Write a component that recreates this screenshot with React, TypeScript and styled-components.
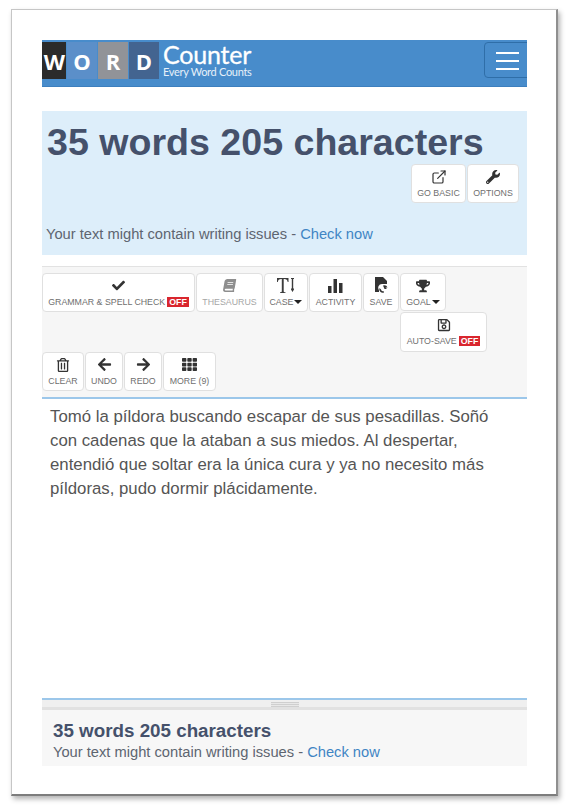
import React from "react";
import styled, { createGlobalStyle } from "styled-components";
import {
  FaArrowLeft,
  FaArrowRight,
  FaBook,
  FaCheck,
  FaRegSave,
  FaRegTrashAlt,
  FaTh,
  FaTrophy,
  FaWrench,
} from "react-icons/fa";
import { ExternalLink } from "lucide-react";

const GlobalStyle = createGlobalStyle`
  html, body {
    margin: 0;
    padding: 0;
    background: #fff;
    font-family: "Liberation Sans", Arial, sans-serif;
  }
  * { box-sizing: border-box; }
`;

const Stage = styled.div`
  width: 569px;
  height: 811px;
  padding: 9px 11px 15px 11px;
  overflow: hidden;
`;

const Sheet = styled.div`
  height: 787px;
  padding: 30px 29px 0 30px;
  background: #fff;
  border: 1px solid #c6c6c6;
  border-right: 2px solid #8f8f8f;
  border-bottom: 2px solid #7d7d7d;
  box-shadow: 2px 3px 5px rgba(0, 0, 0, 0.3);
`;

const Nav = styled.div`
  height: 47px;
  display: flex;
  align-items: flex-start;
  padding-top: 2px;
  background: #488ccb;
  border-bottom: 1px solid #3d7fbe;
  overflow: hidden;
`;

const Tile = styled.div<{ $bg: string; $w: number; $clip?: boolean }>`
  width: ${(p) => p.$w}px;
  height: 37px;
  margin-right: 1px;
  flex: none;
  display: flex;
  align-items: center;
  justify-content: ${(p) => (p.$clip ? "flex-end" : "center")};
  padding-right: ${(p) => (p.$clip ? "1px" : "0")};
  background: ${(p) => p.$bg};
  color: #fff;
  font-family: "Open Sans", sans-serif;
  font-weight: 700;
  font-size: 22px;
  overflow: hidden;
`;

const Brand = styled.div`
  margin-left: 3px;
  flex: none;
  color: #fff;
  font-family: "Lato", sans-serif;
  display: flex;
  flex-direction: column;
`;

const BrandName = styled.div`
  font-size: 25px;
  line-height: 25px;
  letter-spacing: -0.2px;
  -webkit-text-stroke: 0.3px #fff;
`;

const BrandTag = styled.div`
  font-size: 11px;
  line-height: 10px;
  letter-spacing: -0.3px;
  color: #e6f0f9;
`;

const Burger = styled.div`
  width: 55px;
  height: 36px;
  margin-left: auto;
  margin-right: -12px;
  flex: none;
  border: 1px solid #2f6ea8;
  border-radius: 4px;
  padding: 9px 0 0 11px;
  display: flex;
  flex-direction: column;
  gap: 6px;
`;

const BurgerBar = styled.span`
  display: block;
  width: 23px;
  height: 2px;
  background: #fff;
`;

const WordsPanel = styled.div`
  height: 144px;
  margin-top: 24px;
  padding: 9px 8px 0 5px;
  background: #ddeefa;
  display: flex;
  flex-direction: column;
`;

const WordsTitle = styled.h1`
  margin: 0;
  font-size: 37.6px;
  line-height: 44px;
  font-weight: 700;
  color: #45516b;
  white-space: nowrap;
`;

const PanelActions = styled.div`
  display: flex;
  justify-content: flex-end;
`;

const Issues = styled.div`
  font-size: 14.7px;
  line-height: 19px;
  color: #5d6570;
`;

const PanelIssues = styled(Issues)`
  margin-top: 22px;
  margin-left: -1px;
`;

const FooterIssues = styled(Issues)`
  margin-top: 1px;
`;

const CheckLink = styled.a`
  color: #3f85c4;
`;

const Toolbar = styled.div`
  height: 133px;
  margin-top: 11px;
  padding-top: 6px;
  background: #f6f6f6;
  border-top: 1px solid #e2e2e2;
  border-bottom: 2px solid #9cc7ea;
  display: flex;
  flex-direction: column;
`;

const ToolRow = styled.div<{ $indent?: number }>`
  display: flex;
  margin-left: ${(p) => p.$indent ?? 0}px;
`;

const ToolButton = styled.div<{ $w: number; $h?: number; $gap?: number; $muted?: boolean }>`
  width: ${(p) => p.$w}px;
  height: ${(p) => p.$h ?? 39}px;
  margin-right: ${(p) => p.$gap ?? 1}px;
  flex: none;
  background: #fff;
  border: 1px solid #e0e0e0;
  border-radius: 4px;
  display: flex;
  flex-direction: column;
  align-items: center;
  padding-top: 3px;
  color: ${(p) => (p.$muted ? "#8e8e8e" : "#333")};
  svg { display: block; }
`;

const IconSlot = styled.div`
  height: 17px;
  display: flex;
  align-items: center;
  justify-content: center;
`;

const SlantedBook = styled(FaBook)`
  transform: skewX(-10deg);
`;

const ToolLabel = styled.div<{ $muted?: boolean }>`
  margin-top: 3px;
  display: flex;
  align-items: center;
  font-size: 8.8px;
  line-height: 10px;
  white-space: nowrap;
  color: ${(p) => (p.$muted ? "#a6a6a6" : "#6f6f6f")};
`;

const OffBadge = styled.span`
  margin-left: 2px;
  padding: 0 2px;
  background: #d9262e;
  color: #fff;
  font-weight: 700;
  font-size: 8.8px;
  line-height: 10px;
`;

const Caret = styled.span`
  margin-left: 1px;
  width: 0;
  height: 0;
  border-left: 4px solid transparent;
  border-right: 4px solid transparent;
  border-top: 4px solid #222;
`;

const Editor = styled.div`
  height: 299px;
  padding: 6px 30px 0 8px;
  background: #fff;
  font-size: 16.8px;
  line-height: 24px;
  color: #555;
`;

const Resizer = styled.div`
  height: 12px;
  background: #efefef;
  border-top: 2px solid #9cc7ea;
  border-bottom: 3px solid #e1e1e1;
  display: flex;
  justify-content: center;
  padding-top: 2px;
`;

const Grip = styled.div`
  width: 28px;
  height: 5px;
  background: repeating-linear-gradient(#cfcfcf 0 1px, #e8e8e8 1px 2px);
`;

const Footer = styled.div`
  height: 56px;
  padding: 10px 11px 0;
  background: #f7f7f7;
`;

const FooterTitle = styled.div`
  font-size: 18.8px;
  line-height: 22px;
  font-weight: 700;
  color: #45516b;
`;

function CaseIcon() {
  return (
    <svg width="20" height="17" viewBox="0 0 20 17" fill="#3c3c3c">
      <path d="M1 1h11.500v4h-.8C11.400 3 10.700 2 8 2H7.700v12.200c0 .8.500 1 1.800 1v.8H4v-.8c1.300 0 1.800-.2 1.800-1V2H5.500C2.800 2 2.100 3 1.800 5H1z" />
      <path d="M15 1h3v1h-.8v9.500h.8v1l-1.500 2.500-1.500-2.500v-1h.8V2H15z" />
    </svg>
  );
}

function ActivityIcon() {
  return (
    <svg width="15" height="15" viewBox="0 0 15 15" fill="#333">
      <rect x="0" y="8" width="3.500" height="7" />
      <rect x="5.500" y="1" width="3.500" height="14" />
      <rect x="11" y="5" width="3.500" height="10" />
    </svg>
  );
}

function SaveDocIcon() {
  return (
    <svg width="13" height="17" viewBox="0 0 13 17" fill="#333">
      <path d="M0 0h8l4 4v3H7a4 4 0 0 0-3 6.500V15H0z" />
      <path d="M8 8.500a3.500 3.500 0 0 1 4.500 2h-2l1.500 1.500H9.500zM4.500 11a3.500 3.500 0 0 0 4.500 4.500l-.5-1.500A2 2 0 0 1 6 12.500z" />
    </svg>
  );
}

function IssuesLine() {
  return (
    <>
      Your text might contain writing issues - <CheckLink>Check now</CheckLink>
    </>
  );
}

export default function App() {
  return (
    <>
      <GlobalStyle />
      <Stage>
        <Sheet>
          <Nav>
            <Tile $bg="#2b2b2b" $w={24} $clip>W</Tile>
            <Tile $bg="#5b8fc9" $w={30}>O</Tile>
            <Tile $bg="#919398" $w={30}>R</Tile>
            <Tile $bg="#436490" $w={30}>D</Tile>
            <Brand>
              <BrandName>Counter</BrandName>
              <BrandTag>Every Word Counts</BrandTag>
            </Brand>
            <Burger>
              <BurgerBar />
              <BurgerBar />
              <BurgerBar />
            </Burger>
          </Nav>

          <WordsPanel>
            <WordsTitle>35 words 205 characters</WordsTitle>
            <PanelActions>
              <ToolButton $w={55}>
                <IconSlot><ExternalLink size={16} strokeWidth={1.800} /></IconSlot>
                <ToolLabel>GO BASIC</ToolLabel>
              </ToolButton>
              <ToolButton $w={52} $gap={0}>
                <IconSlot><FaWrench size={14} /></IconSlot>
                <ToolLabel>OPTIONS</ToolLabel>
              </ToolButton>
            </PanelActions>
            <PanelIssues><IssuesLine /></PanelIssues>
          </WordsPanel>

          <Toolbar>
            <ToolRow>
              <ToolButton $w={153}>
                <IconSlot><FaCheck size={13} /></IconSlot>
                <ToolLabel>GRAMMAR &amp; SPELL CHECK<OffBadge>OFF</OffBadge></ToolLabel>
              </ToolButton>
              <ToolButton $w={67} $muted>
                <IconSlot><SlantedBook size={13} /></IconSlot>
                <ToolLabel $muted>THESAURUS</ToolLabel>
              </ToolButton>
              <ToolButton $w={44}>
                <IconSlot><CaseIcon /></IconSlot>
                <ToolLabel>CASE<Caret /></ToolLabel>
              </ToolButton>
              <ToolButton $w={53}>
                <IconSlot><ActivityIcon /></IconSlot>
                <ToolLabel>ACTIVITY</ToolLabel>
              </ToolButton>
              <ToolButton $w={36}>
                <IconSlot><SaveDocIcon /></IconSlot>
                <ToolLabel>SAVE</ToolLabel>
              </ToolButton>
              <ToolButton $w={46} $h={38} $gap={0}>
                <IconSlot><FaTrophy size={14} /></IconSlot>
                <ToolLabel>GOAL<Caret /></ToolLabel>
              </ToolButton>
            </ToolRow>
            <ToolRow $indent={358}>
              <ToolButton $w={87} $h={40} $gap={0}>
                <IconSlot><FaRegSave size={14} /></IconSlot>
                <ToolLabel>AUTO-SAVE<OffBadge>OFF</OffBadge></ToolLabel>
              </ToolButton>
            </ToolRow>
            <ToolRow>
              <ToolButton $w={42}>
                <IconSlot><FaRegTrashAlt size={14} /></IconSlot>
                <ToolLabel>CLEAR</ToolLabel>
              </ToolButton>
              <ToolButton $w={38}>
                <IconSlot><FaArrowLeft size={15} /></IconSlot>
                <ToolLabel>UNDO</ToolLabel>
              </ToolButton>
              <ToolButton $w={38}>
                <IconSlot><FaArrowRight size={15} /></IconSlot>
                <ToolLabel>REDO</ToolLabel>
              </ToolButton>
              <ToolButton $w={53}>
                <IconSlot><FaTh size={15} /></IconSlot>
                <ToolLabel>MORE (9)</ToolLabel>
              </ToolButton>
            </ToolRow>
          </Toolbar>

          <Editor>
            Tomó la píldora buscando escapar de sus pesadillas. Soñó con cadenas que la ataban a sus miedos. Al despertar, entendió que soltar era la única cura y ya no necesito más píldoras, pudo dormir plácidamente.
          </Editor>

          <Resizer><Grip /></Resizer>

          <Footer>
            <FooterTitle>35 words 205 characters</FooterTitle>
            <FooterIssues><IssuesLine /></FooterIssues>
          </Footer>
        </Sheet>
      </Stage>
    </>
  );
}
